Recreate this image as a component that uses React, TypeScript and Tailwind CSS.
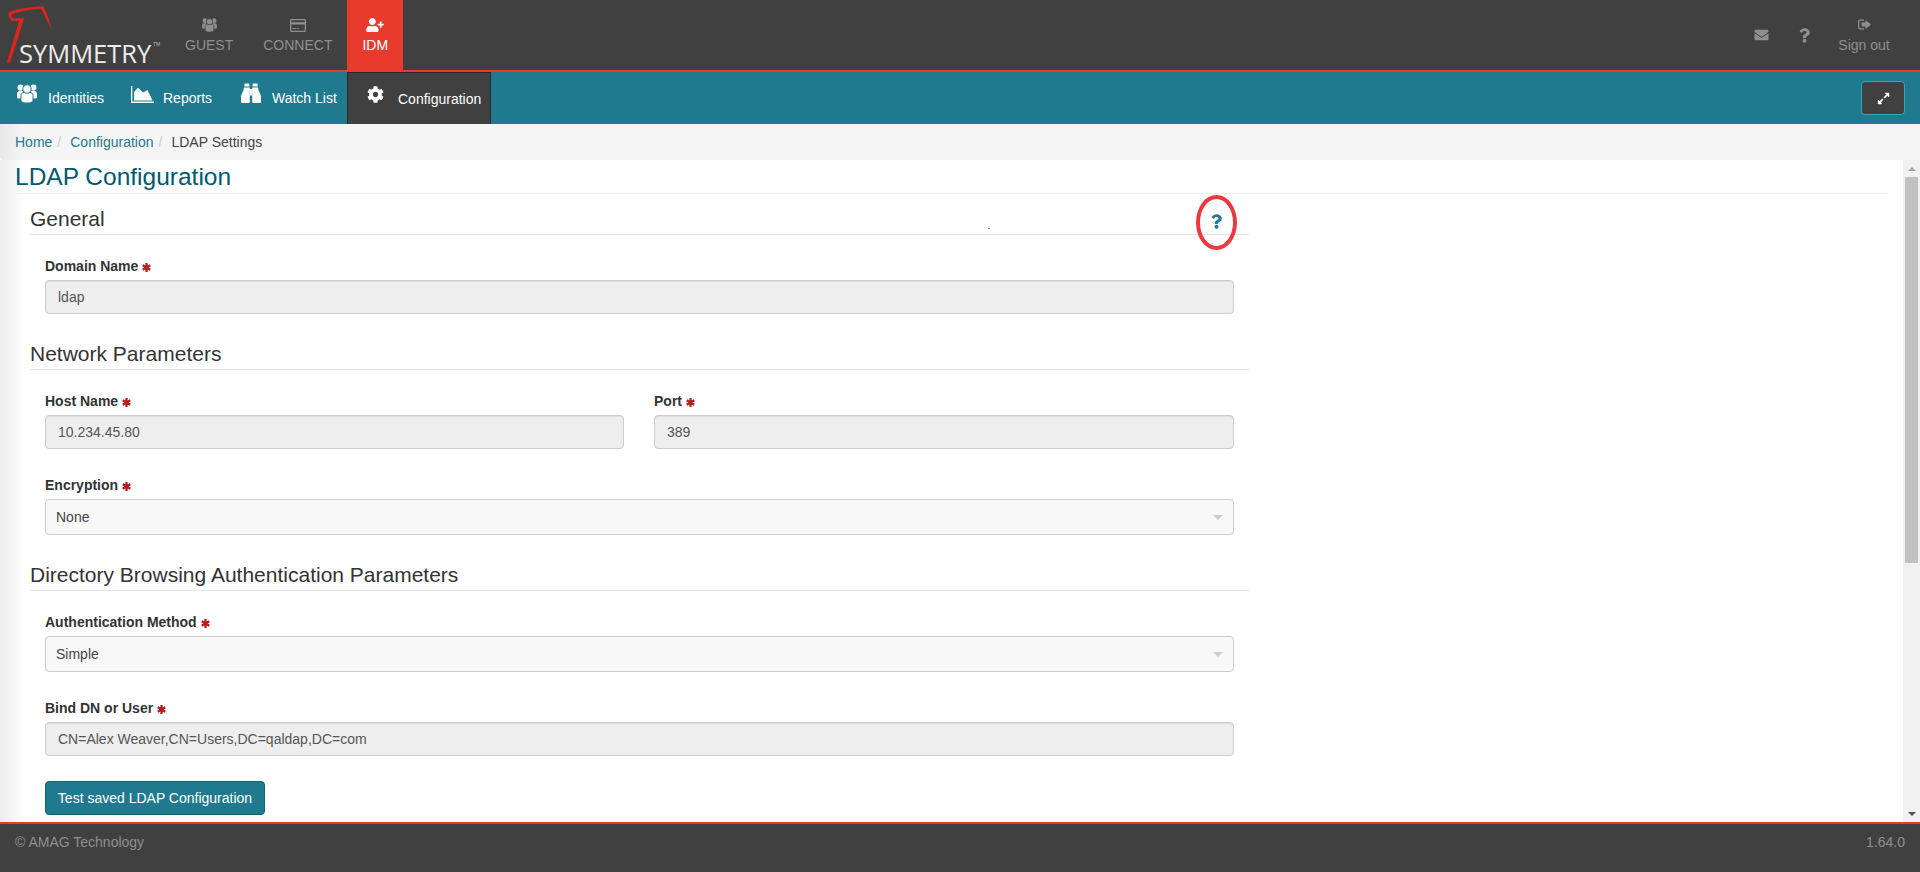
import React from "react";
import { FaUserPlus, FaCog, FaEnvelope, FaQuestion, FaExpandAlt } from "react-icons/fa";

const SignOut = ({ className }: { className?: string }) => (
  <svg viewBox="0 0 13 11" className={className} fill="currentColor">
    <path d="M2 0.5H6V1.7H2.4C1.8 1.7 1.3 2.2 1.3 2.8V8.2C1.3 8.8 1.8 9.3 2.4 9.3H6V10.5H2C0.9 10.5 0 9.6 0 8.5V2.5C0 1.4 0.9 0.5 2 0.5Z" />
    <path d="M7.5 1L13 5.5L7.5 10V7.6H3.6V3.4H7.5Z" />
  </svg>
);

const UsersIcon = ({ className, bg }: { className?: string; bg: string }) => (
  <svg viewBox="0 0 20 19" className={className} fill="currentColor">
    <circle cx="3.6" cy="3.6" r="3.1" />
    <circle cx="16.4" cy="3.6" r="3.1" />
    <path d="M0 13.5V10C0 8 1.2 7 3 7H17C18.8 7 20 8 20 10V13.5C20 14.2 19 14.6 17 14.6H3C1 14.6 0 14.2 0 13.5Z" />
    <path d="M4 16.2V11.6C4 9.4 5.4 8.4 7 8.4H13C14.6 8.4 16 9.4 16 11.6V16.2C16 18 13.5 19 10 19C6.5 19 4 18 4 16.2Z" stroke={bg} strokeWidth="1" />
    <circle cx="10" cy="5" r="4.2" stroke={bg} strokeWidth="1" />
  </svg>
);

const ChartIcon = ({ className }: { className?: string }) => (
  <svg viewBox="0 0 23 17" className={className} fill="currentColor">
    <path d="M0 0H1.3V15.6H23V17H0Z" />
    <path d="M3 14.5V6L7 1.8L12 6.5L16.5 4L21.5 14.5Z" />
  </svg>
);

const BinocularsIcon = ({ className }: { className?: string }) => (
  <svg viewBox="0 0 20 20" className={className} fill="currentColor">
    <rect x="3.4" y="0.5" width="5" height="3" rx="0.6" />
    <rect x="11.6" y="0.5" width="5" height="3" rx="0.6" />
    <path d="M3 4.5H8.8V19C8.8 19.6 8.4 20 7.8 20H1C0.4 20 0 19.6 0 19V14C0 11 2.6 9 3 4.5Z" />
    <path d="M17 4.5H11.2V19C11.2 19.6 11.6 20 12.2 20H19C19.6 20 20 19.6 20 19V14C20 11 17.4 9 17 4.5Z" />
    <rect x="8.8" y="6" width="2.4" height="6.5" />
  </svg>
);

const CardIcon = ({ className }: { className?: string }) => (
  <svg viewBox="0 0 16 13" className={className} fill="currentColor">
    <path fillRule="evenodd" d="M1.5 0H14.5C15.3 0 16 .7 16 1.5V11.5C16 12.3 15.3 13 14.5 13H1.5C.7 13 0 12.3 0 11.5V1.5C0 .7.7 0 1.5 0ZM1.3 1.3V3.2H14.7V1.3ZM1.3 5.6V11.7H14.7V5.6Z" />
    <rect x="2.5" y="9" width="4" height="1" />
    <rect x="7.5" y="9" width="1.5" height="1" />
  </svg>
);

const Star = () => (
  <svg viewBox="0 0 8 8" className="w-[9px] h-[9px] ml-[4px] translate-y-[1px]" stroke="#b71c1c" strokeWidth="2">
    <path d="M4 0V8M0.6 2L7.4 6M7.4 2L0.6 6" />
  </svg>
);

const Label = ({ children }: { children: React.ReactNode }) => (
  <div className="text-[14px] font-bold text-[#333] leading-[16px] h-[16px] mb-[6px] flex items-center">
    {children}
    <Star />
  </div>
);

const Input = ({ value }: { value: string }) => (
  <div className="h-[34px] bg-[#eeeeee] border border-[#cccccc] rounded-[4px] px-3 flex items-center text-[14px] text-[#555] shadow-[inset_0_1px_1px_rgba(0,0,0,0.075)]">
    {value}
  </div>
);

const Select = ({ value }: { value: string }) => (
  <div className="h-[36px] bg-[#f8f8f8] border border-[#cccccc] rounded-[4px] pl-[10px] pr-[10px] flex items-center justify-between text-[14px] text-[#444]">
    <span>{value}</span>
    <span className="w-0 h-0 border-l-[5px] border-r-[5px] border-t-[5px] border-l-transparent border-r-transparent border-t-[#cccccc]" />
  </div>
);

const Section = ({ children }: { children: React.ReactNode }) => (
  <div className="text-[21px] leading-[22px] text-[#333] pt-[1px] pb-[4px] border-b border-[#e5e5e5]">{children}</div>
);

const TopItem = ({ icon, label, active }: { icon: React.ReactNode; label: string; active?: boolean }) => (
  <div className={`h-full flex flex-col items-center px-[15px] pt-[18px] text-[14px] leading-[20px] ${active ? "bg-[#e73c2d] text-white" : "text-[#8f8f8f]"}`}>
    <div className="h-[14px] flex items-center justify-center">{icon}</div>
    <div className="mt-[3px]">{label}</div>
  </div>
);

const NavItem = ({ icon, label, gap }: { icon: React.ReactNode; label: string; gap: string }) => (
  <div className={`h-full flex items-center text-white text-[14px] ${gap}`}>
    {icon}
    <span>{label}</span>
  </div>
);

export default function App() {
  return (
    <div className="h-screen w-full flex flex-col overflow-hidden bg-white" style={{ fontFamily: '"Liberation Sans", Arial, sans-serif' }}>
      <header className="h-[72px] shrink-0 bg-[#404040] border-b-2 border-[#e73c2d] flex items-stretch">
        <div className="w-[170px] shrink-0 relative">
          <svg viewBox="0 0 60 64" className="absolute left-0 top-0 w-[60px] h-[64px]" fill="#d9261f">
            <path d="M8.5 12.5C15 9 30 6.5 43.5 6.5C47 13 50 22 52 31C48 22 44.5 15 41 9C31 9 22 11 14 13.5C11.5 14.5 11 15.5 12.5 17.5L14.5 19.5L11.5 20.5C9.5 18.5 8 15.5 8.5 12.5Z" />
            <path d="M12 18.5L24 18C20 32 15 48 10 62.5H7C11 48 15.5 34 19 20.8L12 21Z" />
          </svg>
          <div className="absolute left-[19px] top-[37px] text-[#ececec] text-[25.5px] leading-[32px] whitespace-nowrap" style={{ fontFamily: '"Open Sans", sans-serif', fontWeight: 400 }}>
            SYMMETRY
          </div>
          <span className="absolute left-[153px] top-[41px] text-[5px] leading-[6px] text-[#bbbbbb]">TM</span>
        </div>
        <TopItem icon={<UsersIcon bg="#404040" className="w-[15px] h-[14px]" />} label="GUEST" />
        <TopItem icon={<CardIcon className="w-[16px] h-[13px]" />} label="CONNECT" />
        <TopItem active icon={<FaUserPlus className="w-[18px] h-[14px]" />} label="IDM" />
        <div className="flex-1" />
        <div className="flex items-stretch text-[#8f8f8f]">
          <div className="w-[43px] flex items-center justify-center"><FaEnvelope className="w-[15px] h-[14px]" /></div>
          <div className="w-[43px] flex items-center justify-center"><FaQuestion className="w-[11px] h-[15px]" /></div>
          <div className="w-[94px] pr-[18px] flex flex-col items-center pt-[19px] text-[14px] leading-[20px]">
            <SignOut className="w-[13px] h-[11px]" />
            <span className="mt-[5px]">Sign out</span>
          </div>
        </div>
      </header>

      <nav className="h-[52px] shrink-0 bg-[#1f7a8f] flex items-stretch pl-[17px] pr-[15px]">
        <NavItem gap="gap-[11px] w-[114px]" icon={<UsersIcon bg="#1f7a8f" className="w-[20px] h-[19px] -translate-y-[5px]" />} label="Identities" />
        <NavItem gap="gap-[9px] w-[110px]" icon={<ChartIcon className="w-[23px] h-[17px] -translate-y-[4px]" />} label="Reports" />
        <NavItem gap="gap-[11px] w-[106px]" icon={<BinocularsIcon className="w-[20px] h-[20px] -translate-y-[5px]" />} label="Watch List" />
        <div className="h-full w-[144px] bg-[#404040] border-x border-t border-[#2a2a2a] flex items-center text-white text-[14px] pl-[19px] gap-[14px]">
          <FaCog className="w-[17px] h-[17px] -translate-y-[4px]" />
          <span className="pt-[1px]">Configuration</span>
        </div>
        <div className="flex-1" />
        <div className="self-center w-[44px] h-[34px] bg-[#404040] border border-[#35a5c0] rounded-[4px] flex items-center justify-center text-white">
          <FaExpandAlt className="w-[13px] h-[13px]" />
        </div>
      </nav>

      <div className="h-[36px] shrink-0 bg-gradient-to-r from-[#e8e8e8] to-[#f5f5f5] to-[1.3%] flex items-center pl-[15px] text-[14px] rounded-bl-[4px]">
        <span className="text-[#1f7a8f]">Home</span>
        <span className="text-[#ccc] ml-[5px] mr-[9px]">/</span>
        <span className="text-[#1f7a8f]">Configuration</span>
        <span className="text-[#ccc] ml-[5px] mr-[9px]">/</span>
        <span className="text-[#444]">LDAP Settings</span>
      </div>

      <div className="flex-1 min-h-0 flex">
        <main className="flex-1 min-w-0 bg-gradient-to-r from-[#ececec] from-0% to-white to-[1.3%] pl-[15px] pr-[15px] overflow-hidden">
          <h1 className="text-[24.5px] leading-[26px] text-[#00596e] pt-[3px] pb-[3px] border-b border-[#eeeeee] mt-[1px]">LDAP Configuration</h1>
          <div className="w-[1219px] ml-[15px]">
            <div className="mt-[13px] relative">
              <Section>General</Section>
              <div className="absolute left-[958px] top-[21px] w-[2px] h-[1px] bg-[#888]" />
              <div className="absolute left-[1166px] top-[-12px] w-[41px] h-[55px] rounded-[50%] border-[4px] border-[#ea3a3f] flex items-center justify-center text-[#1f7a8f]">
                <FaQuestion className="w-[11px] h-[15px] -translate-y-[1px]" />
              </div>
            </div>
            <div className="mx-[15px] mt-[23px] w-[1189px]">
              <Label>Domain Name</Label>
              <Input value="ldap" />
            </div>
            <div className="mt-[28px]"><Section>Network Parameters</Section></div>
            <div className="mx-[15px] mt-[23px] w-[1189px] flex gap-[30px]">
              <div className="w-[579px]"><Label>Host Name</Label><Input value="10.234.45.80" /></div>
              <div className="w-[580px]"><Label>Port</Label><Input value="389" /></div>
            </div>
            <div className="mx-[15px] mt-[28px] w-[1189px]">
              <Label>Encryption</Label>
              <Select value="None" />
            </div>
            <div className="mt-[28px]"><Section>Directory Browsing Authentication Parameters</Section></div>
            <div className="mx-[15px] mt-[23px] w-[1189px]">
              <Label>Authentication Method</Label>
              <Select value="Simple" />
            </div>
            <div className="mx-[15px] mt-[28px] w-[1189px]">
              <Label>Bind DN or User</Label>
              <Input value="CN=Alex Weaver,CN=Users,DC=qaldap,DC=com" />
            </div>
            <button className="ml-[15px] mt-[25px] h-[34px] w-[220px] bg-[#1f7a8f] border border-[#17606f] rounded-[4px] text-white text-[14px]">Test saved LDAP Configuration</button>
          </div>
        </main>
        <div className="w-[17px] shrink-0 bg-[#f1f1f1] flex flex-col items-center">
          <div className="h-[17px] flex items-center justify-center">
            <span className="w-0 h-0 border-l-[4px] border-r-[4px] border-b-[4px] border-l-transparent border-r-transparent border-b-[#a3a3a3]" />
          </div>
          <div className="w-[13px] h-[386px] bg-[#c1c1c1]" />
          <div className="flex-1" />
          <div className="h-[17px] flex items-center justify-center">
            <span className="w-0 h-0 border-l-[4px] border-r-[4px] border-t-[4px] border-l-transparent border-r-transparent border-t-[#505050]" />
          </div>
        </div>
      </div>

      <footer className="h-[50px] shrink-0 bg-[#404040] border-t-2 border-[#e73c2d] flex items-center justify-between pl-[15px] pr-[15px] text-[14px] text-[#8f8f8f] pb-[12px]">
        <span>© AMAG Technology</span>
        <span>1.64.0</span>
      </footer>
    </div>
  );
}
